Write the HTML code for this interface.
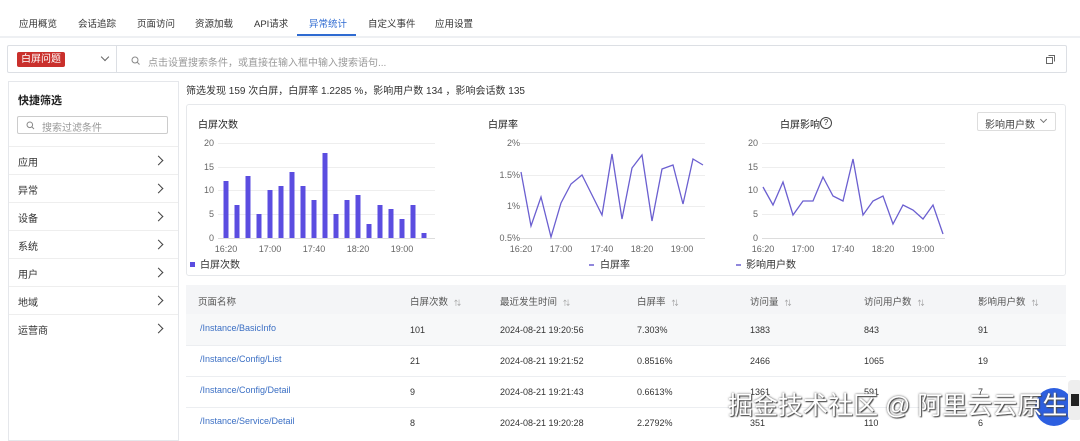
<!DOCTYPE html><html><head><meta charset="utf-8"><style>
*{margin:0;padding:0;box-sizing:border-box}
body{width:1080px;height:433px;overflow:hidden;background:#fff;font-family:"Liberation Sans","Noto Sans CJK SC",sans-serif;font-size:12px;color:#333;position:relative}
.a{position:absolute;white-space:nowrap}
.tab{top:16px;font-size:9.5px;color:#333}
.side{color:#333;font-size:10px}
.chev{width:7px;height:7px;border-right:1.3px solid #444;border-top:1.3px solid #444;transform:rotate(45deg)}
.th{color:#555;font-size:9.5px;top:294px}
.td{font-size:9px;color:#333}
.lk{color:#3b6fc4;font-size:9px}
.srt{color:#999;font-size:7px;margin-left:6px}
</style></head><body>
<!-- tabs -->
<div class="a" style="left:0;top:36px;width:1080px;height:2px;background:#eef0f3"></div>
<div class="a tab" style="left:19px">应用概览</div>
<div class="a tab" style="left:78px">会话追踪</div>
<div class="a tab" style="left:137px">页面访问</div>
<div class="a tab" style="left:195px">资源加载</div>
<div class="a tab" style="left:254px">API请求</div>
<div class="a tab" style="left:309px;color:#2f6bd1">异常统计</div>
<div class="a" style="left:297px;top:34px;width:59px;height:2px;background:#2f6bd1"></div>
<div class="a tab" style="left:368px">自定义事件</div>
<div class="a tab" style="left:435px">应用设置</div>
<!-- search -->
<div class="a" style="left:7px;top:45px;width:1060px;height:28px;border:1px solid #dcdfe4;border-radius:2px"></div>
<div class="a" style="left:116px;top:46px;width:1px;height:26px;background:#dcdfe4"></div>
<div class="a" style="left:17px;top:52px;width:48px;height:15px;background:#c9302c;border-radius:2px;color:#fff;font-size:10px;text-align:center;line-height:15px">白屏问题</div>
<div class="a" style="left:102px;top:54px;width:6px;height:6px;border-right:1.2px solid #666;border-bottom:1.2px solid #666;transform:rotate(45deg)"></div>
<svg class="a" style="left:131px;top:56px" width="10" height="10"><circle cx="4" cy="4" r="3" fill="none" stroke="#888" stroke-width="1"/><line x1="6.2" y1="6.2" x2="8.5" y2="8.5" stroke="#888"/></svg>
<div class="a" style="left:148px;top:54px;font-size:10px;color:#999">点击设置搜索条件，或直接在输入框中输入搜索语句...</div>
<svg class="a" style="left:1046px;top:55px" width="9" height="9"><rect x="0.5" y="2.5" width="6" height="6" fill="none" stroke="#666"/><path d="M2.5 0.5h6v6" fill="none" stroke="#666"/></svg>
<!-- sidebar -->
<div class="a" style="left:8px;top:81px;width:171px;height:360px;border:1px solid #e5e7eb"></div>
<div class="a" style="left:18px;top:92px;font-size:11px;font-weight:bold;color:#222">快捷筛选</div>
<div class="a" style="left:17px;top:116px;width:151px;height:18px;border:1px solid #ccc;border-radius:2px"></div>
<svg class="a" style="left:26px;top:121px" width="9" height="9"><circle cx="3.8" cy="3.8" r="2.8" fill="none" stroke="#888"/><line x1="5.8" y1="5.8" x2="8" y2="8" stroke="#888"/></svg>
<div class="a" style="left:42px;top:119px;font-size:10px;color:#999">搜索过滤条件</div>
<div class="a" style="left:9px;top:146px;width:169px;height:1px;background:#eee"></div>
<div class="a side" style="left:18px;top:154px">应用</div><div class="a chev" style="left:155px;top:157px"></div>
<div class="a" style="left:9px;top:174px;width:169px;height:1px;background:#eee"></div>
<div class="a side" style="left:18px;top:182px">异常</div><div class="a chev" style="left:155px;top:185px"></div>
<div class="a" style="left:9px;top:202px;width:169px;height:1px;background:#eee"></div>
<div class="a side" style="left:18px;top:210px">设备</div><div class="a chev" style="left:155px;top:213px"></div>
<div class="a" style="left:9px;top:230px;width:169px;height:1px;background:#eee"></div>
<div class="a side" style="left:18px;top:238px">系统</div><div class="a chev" style="left:155px;top:241px"></div>
<div class="a" style="left:9px;top:258px;width:169px;height:1px;background:#eee"></div>
<div class="a side" style="left:18px;top:266px">用户</div><div class="a chev" style="left:155px;top:269px"></div>
<div class="a" style="left:9px;top:286px;width:169px;height:1px;background:#eee"></div>
<div class="a side" style="left:18px;top:294px">地域</div><div class="a chev" style="left:155px;top:297px"></div>
<div class="a" style="left:9px;top:314px;width:169px;height:1px;background:#eee"></div>
<div class="a side" style="left:18px;top:322px">运营商</div><div class="a chev" style="left:155px;top:325px"></div>
<!-- summary -->
<div class="a" style="left:186px;top:82px;font-size:10px;color:#333">筛选发现 159 次白屏，白屏率 1.2285 %，影响用户数 134 ，影响会话数 135</div>
<!-- chart card -->
<div class="a" style="left:186px;top:104px;width:880px;height:172px;border:1px solid #e6e8eb;border-radius:3px"></div>
<div class="a" style="left:198px;top:116px;font-size:10px;color:#222">白屏次数</div>
<div class="a" style="left:488px;top:116px;font-size:10px;color:#222">白屏率</div>
<div class="a" style="left:780px;top:116px;font-size:10px;color:#222">白屏影响</div>
<div class="a" style="left:820px;top:117px;width:12px;height:12px;border:1px solid #444;border-radius:50%;font-size:8px;text-align:center;line-height:10px">?</div>
<div class="a" style="left:977px;top:112px;width:79px;height:19px;border:1px solid #ddd;border-radius:2px"></div>
<div class="a" style="left:985px;top:116px;font-size:10px;color:#444">影响用户数</div>
<div class="a" style="left:1041px;top:117px;width:5px;height:5px;border-right:1px solid #777;border-bottom:1px solid #777;transform:rotate(45deg)"></div>
<svg class="a" style="left:0;top:0" width="1080" height="290" font-family="Liberation Sans" font-size="9" fill="#666">
<g stroke="#eee" stroke-width="1">
<line x1="218" y1="143.5" x2="435" y2="143.5"/><line x1="218" y1="167.5" x2="435" y2="167.5"/><line x1="218" y1="190.5" x2="435" y2="190.5"/><line x1="218" y1="214.5" x2="435" y2="214.5"/><line x1="218" y1="238.5" x2="435" y2="238.5" stroke="#ddd"/>
<line x1="520" y1="143.5" x2="705" y2="143.5"/><line x1="520" y1="175.5" x2="705" y2="175.5"/><line x1="520" y1="206.5" x2="705" y2="206.5"/><line x1="520" y1="238.5" x2="705" y2="238.5" stroke="#ddd"/>
<line x1="762" y1="143.5" x2="945" y2="143.5"/><line x1="762" y1="167.5" x2="945" y2="167.5"/><line x1="762" y1="190.5" x2="945" y2="190.5"/><line x1="762" y1="214.5" x2="945" y2="214.5"/><line x1="762" y1="238.5" x2="945" y2="238.5" stroke="#ddd"/>
</g>
<g text-anchor="end"><text x="214" y="146">20</text><text x="214" y="170">15</text><text x="214" y="193">10</text><text x="214" y="217">5</text><text x="214" y="241">0</text>
<text x="520" y="146">2%</text><text x="520" y="178">1.5%</text><text x="520" y="209">1%</text><text x="520" y="241">0.5%</text>
<text x="758" y="146">20</text><text x="758" y="170">15</text><text x="758" y="193">10</text><text x="758" y="217">5</text><text x="758" y="241">0</text></g>
<g text-anchor="middle"><text x="226" y="252">16:20</text><text x="270" y="252">17:00</text><text x="314" y="252">17:40</text><text x="358" y="252">18:20</text><text x="402" y="252">19:00</text>
<text x="521" y="252">16:20</text><text x="561" y="252">17:00</text><text x="602" y="252">17:40</text><text x="642" y="252">18:20</text><text x="682" y="252">19:00</text>
<text x="763" y="252">16:20</text><text x="803" y="252">17:00</text><text x="843" y="252">17:40</text><text x="883" y="252">18:20</text><text x="923" y="252">19:00</text></g>
<g fill="#5b4de0">
<rect x="223.5" y="181" width="5" height="57"/><rect x="234.5" y="205" width="5" height="33"/><rect x="245.5" y="176" width="5" height="62"/><rect x="256.5" y="214" width="5" height="24"/><rect x="267.5" y="190" width="5" height="48"/><rect x="278.5" y="186" width="5" height="52"/><rect x="289.5" y="172" width="5" height="66"/><rect x="300.5" y="186" width="5" height="52"/><rect x="311.5" y="200" width="5" height="38"/><rect x="322.5" y="153" width="5" height="85"/><rect x="333.5" y="214" width="5" height="24"/><rect x="344.5" y="200" width="5" height="38"/><rect x="355.5" y="195" width="5" height="43"/><rect x="366.5" y="224" width="5" height="14"/><rect x="377.5" y="205" width="5" height="33"/><rect x="388.5" y="209" width="5" height="29"/><rect x="399.5" y="219" width="5" height="19"/><rect x="410.5" y="205" width="5" height="33"/><rect x="421.5" y="233" width="5" height="5"/>
<rect x="190" y="262" width="5" height="5"/></g>
<polyline fill="none" stroke="#6b5fd0" stroke-width="1.3" points="521,172 531,226 541,197 551,237 561,203 571,184 582,175 592,195 602,215 612,154 622,219 632,168 642,155 652,221 662,169 673,165 683,204 693,159 703,165"/>
<polyline fill="none" stroke="#6b5fd0" stroke-width="1.3" points="763,187 773,205 783,182 793,215 803,201 813,201 823,177 833,196 843,201 853,159 863,215 873,201 883,196 893,224 903,205 913,210 923,219 933,205 943,234"/>
<g stroke="#6b5fd0" stroke-width="1.5"><line x1="589" y1="265" x2="594" y2="265"/><line x1="736" y1="265" x2="741" y2="265"/></g>
<g font-size="10" fill="#333"><text x="200" y="268">白屏次数</text><text x="600" y="268">白屏率</text><text x="746" y="268">影响用户数</text></g>
</svg>
<!-- table -->
<div class="a" style="left:186px;top:285px;width:880px;height:29px;background:#f4f5f7"></div>
<div class="a" style="left:186px;top:314px;width:880px;height:31px;background:#f7f8f9"></div>
<div class="a" style="left:186px;top:345px;width:880px;height:1px;background:#eceef1"></div>
<div class="a" style="left:186px;top:376px;width:880px;height:1px;background:#eceef1"></div>
<div class="a" style="left:186px;top:407px;width:880px;height:1px;background:#eceef1"></div>
<div class="a th" style="left:198px">页面名称</div>
<div class="a th" style="left:410px">白屏次数<span class="srt">⇅</span></div>
<div class="a th" style="left:500px">最近发生时间<span class="srt">⇅</span></div>
<div class="a th" style="left:637px">白屏率<span class="srt">⇅</span></div>
<div class="a th" style="left:750px">访问量<span class="srt">⇅</span></div>
<div class="a th" style="left:864px">访问用户数<span class="srt">⇅</span></div>
<div class="a th" style="left:978px">影响用户数<span class="srt">⇅</span></div>

<div class="a lk" style="left:200px;top:323px">/Instance/BasicInfo</div>
<div class="a td" style="left:410px;top:325px">101</div><div class="a td" style="left:500px;top:325px">2024-08-21 19:20:56</div><div class="a td" style="left:637px;top:325px">7.303%</div><div class="a td" style="left:750px;top:325px">1383</div><div class="a td" style="left:864px;top:325px">843</div><div class="a td" style="left:978px;top:325px">91</div>
<div class="a lk" style="left:200px;top:354px">/Instance/Config/List</div>
<div class="a td" style="left:410px;top:356px">21</div><div class="a td" style="left:500px;top:356px">2024-08-21 19:21:52</div><div class="a td" style="left:637px;top:356px">0.8516%</div><div class="a td" style="left:750px;top:356px">2466</div><div class="a td" style="left:864px;top:356px">1065</div><div class="a td" style="left:978px;top:356px">19</div>
<div class="a lk" style="left:200px;top:385px">/Instance/Config/Detail</div>
<div class="a td" style="left:410px;top:387px">9</div><div class="a td" style="left:500px;top:387px">2024-08-21 19:21:43</div><div class="a td" style="left:637px;top:387px">0.6613%</div><div class="a td" style="left:750px;top:387px">1361</div><div class="a td" style="left:864px;top:387px">591</div><div class="a td" style="left:978px;top:387px">7</div>
<div class="a lk" style="left:200px;top:416px">/Instance/Service/Detail</div>
<div class="a td" style="left:410px;top:418px">8</div><div class="a td" style="left:500px;top:418px">2024-08-21 19:20:28</div><div class="a td" style="left:637px;top:418px">2.2792%</div><div class="a td" style="left:750px;top:418px">351</div><div class="a td" style="left:864px;top:418px">110</div><div class="a td" style="left:978px;top:418px">6</div>
<!-- watermark -->
<div class="a" style="left:1035px;top:388px;width:38px;height:38px;border-radius:50%;background:#2d5fe0"></div>
<div class="a" style="left:1068px;top:380px;width:14px;height:40px;background:#eee;border-radius:4px"></div>
<div class="a" style="left:1071px;top:394px;width:8px;height:12px;background:#222"></div>
<div class="a" style="left:728px;top:386px;font-size:25px;color:#fff;text-shadow:0 0 2px #555,1px 1px 1px #444">掘金技术社区 @ 阿里云云原生</div>
</body></html>
